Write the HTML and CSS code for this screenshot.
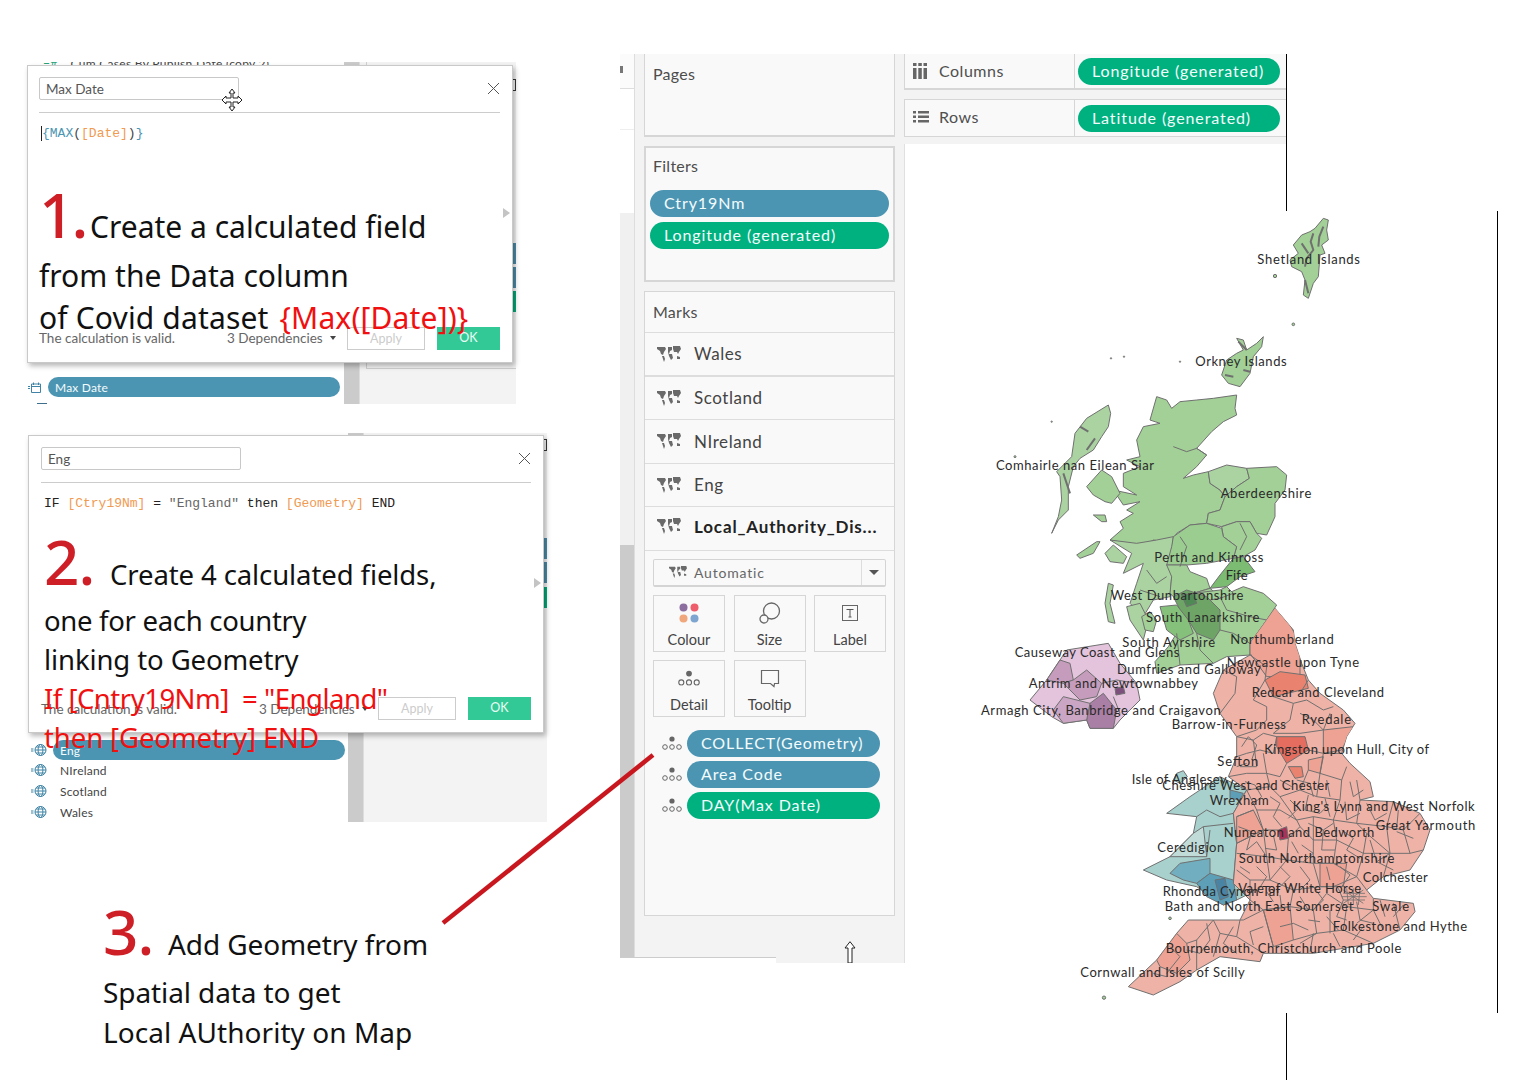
FILE: index.html
```html
<!DOCTYPE html>
<html lang="en">
<head>
<meta charset="utf-8">
<title>Tableau map walkthrough</title>
<link rel="stylesheet" href="styles.css">
</head>
<body>
<svg class="defs" width="0" height="0" aria-hidden="true">
  <defs>
    <symbol id="i-map" viewBox="0 0 24 16">
      <path fill="#6a6a6a" d="M0 1h8l1 2-2 3-1 3-2-1-1-3-3-2zM5 10h2l1 3-1 3-1-3zM11 1h4v3l-2 1-1 3 3 0 1 4-2 2-2-4-1-4zM16 0h7l1 3-2 3-1 2-1-2-3 0-1-3zM20 10l3 1 0 2-3 0z"/>
    </symbol>
    <symbol id="i-detail" viewBox="0 0 20 14">
      <circle cx="10" cy="3" r="2.6" fill="#666"/>
      <g fill="none" stroke="#666" stroke-width="1"><circle cx="3" cy="11" r="2.3"/><circle cx="10" cy="11" r="2.3"/><circle cx="17" cy="11" r="2.3"/></g>
    </symbol>
    <symbol id="i-globe" viewBox="0 0 16 14">
      <g fill="none" stroke="#3f84a6" stroke-width="1"><circle cx="9.500" cy="7" r="5.500"/><ellipse cx="9.500" cy="7" rx="2.400" ry="5.500"/><path d="M4 7h11M5 4h9M5 10h9"/></g>
      <path d="M0 6h2.500M0 8h2.500" stroke="#3f84a6"/>
    </symbol>
  </defs>
</svg>

<main class="canvas">

  <section class="backdrop backdrop-one">
    <p class="cut-row"><span class="cut-icon">=#</span>Cum Cases By Publish Date (copy 2)</p>
    <div class="backdrop-strip"></div>
    <div class="backdrop-side"><div class="side-frame"></div></div>
    <div class="field-row field-row-one">
      <svg class="cal-icon" width="13" height="11" viewBox="0 0 13 11"><path d="M0 4.500h2M0 6.500h2M3.500 2h9v8.500h-9zM3.500 4.500h9M5.500 .5v2.500M10.500 .5v2.500" fill="none" stroke="#3f84a6"/></svg>
      <span class="pill pill-blue pill-small">Max Date</span>
    </div>
    <span class="cut-dash"></span>
    <span class="edge-tab edge-a"></span><span class="edge-tab edge-b"></span><span class="edge-tab edge-c"></span>
    <span class="edge-mark edge-mark-one"></span>
  </section>

  <section class="dialog dialog-one">
    <header class="dialog-head">
      <div class="name-input">Max Date</div>
      <svg class="close" width="13" height="13" viewBox="0 0 13 13"><path d="M1 1l11 11M12 1L1 12" stroke="#555" fill="none"/></svg>
    </header>
    <div class="code"><span class="caret"></span><span class="c-blue">{MAX</span>(<span class="c-orange">[Date]</span>)<span class="c-blue">}</span></div>
    <span class="side-arrow"></span>
    <footer class="dialog-foot">
      <span class="valid">The calculation is valid.</span>
      <span class="deps">3 Dependencies <i class="caret-down"></i></span>
      <span class="btn-apply">Apply</span>
      <span class="btn-ok">OK</span>
    </footer>
  </section>

  <svg class="move-cursor" width="24" height="24" viewBox="0 0 24 24"><path d="M12 1l3 4h-2v5h5V8l4 4-4 4v-2h-5v5h2l-3 4-3-4h2v-5H6v2l-4-4 4-4v2h5V5H9z" fill="#fff" stroke="#222"/></svg>

  <section class="backdrop backdrop-two">
    <div class="backdrop-strip"></div>
    <div class="backdrop-side"></div>
    <ul class="field-list">
      <li class="field-row"><svg class="globe" width="16" height="14"><use href="#i-globe"/></svg><span class="pill pill-blue pill-small pill-eng">Eng</span></li>
      <li class="field-row"><svg class="globe" width="16" height="14"><use href="#i-globe"/></svg><span class="field-name">NIreland</span></li>
      <li class="field-row"><svg class="globe" width="16" height="14"><use href="#i-globe"/></svg><span class="field-name">Scotland</span></li>
      <li class="field-row"><svg class="globe" width="16" height="14"><use href="#i-globe"/></svg><span class="field-name">Wales</span></li>
    </ul>
    <span class="edge-tab edge-d"></span><span class="edge-tab edge-e"></span><span class="edge-tab edge-f"></span>
    <span class="edge-mark edge-mark-two"></span>
  </section>

  <section class="dialog dialog-two">
    <header class="dialog-head">
      <div class="name-input">Eng</div>
      <svg class="close" width="13" height="13" viewBox="0 0 13 13"><path d="M1 1l11 11M12 1L1 12" stroke="#555" fill="none"/></svg>
    </header>
    <div class="code code-dark">IF <span class="c-orange">[Ctry19Nm]</span> = <span class="c-gray">"England"</span> then <span class="c-orange">[Geometry]</span> END</div>
    <span class="side-arrow"></span>
    <footer class="dialog-foot">
      <span class="valid">The calculation is valid.</span>
      <span class="deps">3 Dependencies <i class="caret-down"></i></span>
      <span class="btn-apply">Apply</span>
      <span class="btn-ok">OK</span>
    </footer>
  </section>

  <div class="note note-one">
    <p class="line line-a"><span class="num">1.</span><span>Create a calculated field</span></p>
    <p class="line line-b">from the Data column</p>
    <p class="line line-c"><span>of Covid dataset</span><span class="red">{Max([Date])}</span></p>
  </div>

  <div class="note note-two">
    <p class="line line-a"><span class="num">2.</span><span>Create 4 calculated fields,</span></p>
    <p class="line line-d">one for each country</p>
    <p class="line line-e">linking to Geometry</p>
    <p class="line line-e red tight">If [Cntry19Nm]  = "England"</p>
    <p class="line line-e red">then [Geometry] END</p>
  </div>

  <div class="note note-three">
    <p class="line line-a"><span class="num">3.</span><span>Add Geometry from</span></p>
    <p class="line line-d">Spatial data to get</p>
    <p class="line line-f">Local AUthority on Map</p>
  </div>

  <aside class="sidebar">
    <div class="side-rail">
      <div class="rail-top"><i class="rail-dot"></i></div>
      <div class="rail-gap"></div>
      <div class="rail-plain"></div>
      <div class="rail-mid"></div>
      <div class="rail-scroll"></div>
    </div>
    <div class="cards">
      <section class="card card-pages"><h2 class="card-title">Pages</h2></section>
      <section class="card card-filters">
        <h2 class="card-title">Filters</h2>
        <div class="pill-stack">
          <span class="pill pill-blue">Ctry19Nm</span>
          <span class="pill pill-green">Longitude (generated)</span>
        </div>
      </section>
      <section class="card card-marks">
        <h2 class="card-title marks-title">Marks</h2>
        <div class="layer"><svg class="map-icon" width="24" height="16"><use href="#i-map"/></svg>Wales</div>
        <div class="layer"><svg class="map-icon" width="24" height="16"><use href="#i-map"/></svg>Scotland</div>
        <div class="layer"><svg class="map-icon" width="24" height="16"><use href="#i-map"/></svg>NIreland</div>
        <div class="layer"><svg class="map-icon" width="24" height="16"><use href="#i-map"/></svg>Eng</div>
        <div class="layer layer-active"><svg class="map-icon" width="24" height="16"><use href="#i-map"/></svg>Local_Authority_Dis...</div>
        <div class="marks-body">
          <div class="mark-type">
            <svg class="map-icon-small" width="18" height="12"><use href="#i-map"/></svg>
            <span class="mark-type-name">Automatic</span>
            <span class="mark-type-arrow"><i></i></span>
          </div>
          <div class="mark-grid">
            <div class="mark-btn">
              <svg width="22" height="22" viewBox="0 0 22 22"><circle cx="5.500" cy="5.500" r="4" fill="#8c6d9f"/><circle cx="16.500" cy="5.500" r="4" fill="#ee5d6c"/><circle cx="5.500" cy="16.500" r="4" fill="#f0a77c"/><circle cx="16.500" cy="16.500" r="4" fill="#7da5cf"/></svg>
              <span>Colour</span>
            </div>
            <div class="mark-btn">
              <svg width="22" height="22" viewBox="0 0 22 22"><circle cx="12.500" cy="9" r="8" fill="none" stroke="#666" stroke-width="1.300"/><circle cx="5" cy="17" r="4" fill="#f9f9f9" stroke="#666" stroke-width="1.300"/></svg>
              <span>Size</span>
            </div>
            <div class="mark-btn">
              <svg width="22" height="22" viewBox="0 0 22 22"><rect x="3.500" y="3.500" width="15" height="15" fill="none" stroke="#666"/><path d="M7.500 7.500h7M11 7.500v7.500M9.500 15h3" fill="none" stroke="#555"/></svg>
              <span>Label</span>
            </div>
            <div class="mark-btn">
              <svg width="22" height="22" viewBox="0 0 20 14"><use href="#i-detail"/></svg>
              <span>Detail</span>
            </div>
            <div class="mark-btn">
              <svg width="22" height="22" viewBox="0 0 22 22"><path d="M2.500 3.500h17v13h-4l-.5 3-3.500-3h-9z" fill="none" stroke="#666" stroke-width="1.200"/></svg>
              <span>Tooltip</span>
            </div>
          </div>
          <div class="mark-pill"><svg width="20" height="14"><use href="#i-detail"/></svg><span class="pill pill-blue">COLLECT(Geometry)</span></div>
          <div class="mark-pill"><svg width="20" height="14"><use href="#i-detail"/></svg><span class="pill pill-blue">Area Code</span></div>
          <div class="mark-pill"><svg width="20" height="14"><use href="#i-detail"/></svg><span class="pill pill-green">DAY(Max Date)</span></div>
        </div>
      </section>
      <div class="sidebar-foot">
        <svg class="up-cursor" width="12" height="22" viewBox="0 0 12 22"><path d="M6 .7l5 6.300H8v15H4V7H1z" fill="#fff" stroke="#222"/></svg>
      </div>
    </div>
    <div class="foot-tab"></div>
  </aside>

  <section class="shelves">
    <div class="shelf shelf-columns">
      <div class="shelf-label">
        <svg width="14" height="16" viewBox="0 0 14 16"><path d="M0 5h3.500v11H0zM5.300 5h3.500v11H5.300zM10.500 5H14v11h-3.500zM0 0h3.500v3H0zM5.300 0h3.500v3H5.300zM10.500 0H14v3h-3.500z" fill="#666"/></svg>
        <span>Columns</span>
      </div>
      <div class="shelf-body"><span class="pill pill-green pill-shelf">Longitude (generated)</span></div>
    </div>
    <div class="shelf shelf-rows">
      <div class="shelf-label">
        <svg width="16" height="14" viewBox="0 0 16 14"><path d="M0 1h3v2.500H0zM5 1h11v2.500H5zM0 5.500h3V8H0zM5 5.500h11V8H5zM0 10h3v2.500H0zM5 10h11v2.500H5z" fill="#666"/></svg>
        <span>Rows</span>
      </div>
      <div class="shelf-body"><span class="pill pill-green pill-shelf">Latitude (generated)</span></div>
    </div>
  </section>
  <div class="view-frame"></div>

  <span class="rule rule-top"></span>
  <span class="rule rule-right"></span>
  <span class="rule rule-bottom"></span>

  <svg class="pointer-line" width="240" height="190" viewBox="0 0 240 190"><path d="M13 178L223 10" stroke="#c8171e" stroke-width="4.500" fill="none"/></svg>

  <svg class="uk-map" width="520" height="820" viewBox="0 0 1560 2460" role="img" aria-label="Map of UK local authorities">
    <defs>
      <clipPath id="clip-england"><path d="M885 1225L915 1260 940 1290 945 1330 965 1390 985 1440 1020 1480 1090 1530 1125 1570 1100 1610 1085 1660 1110 1690 1170 1745 1180 1790 1140 1800 1240 1805 1320 1840 1350 1890 1330 1950 1290 2010 1210 2030 1160 2070 1180 2095 1300 2110 1305 2135 1260 2190 1180 2230 1000 2260 850 2260 840 2285 720 2270 650 2310 600 2345 520 2385 445 2360 530 2280 590 2200 625 2160 700 2160 780 2160 810 2100 760 2050 770 1930 760 1840 800 1770 745 1730 770 1670 770 1610 720 1540 700 1480 730 1410 810 1365 810 1330 860 1260z"/></clipPath>
    </defs>

    <g class="shape" fill="#a2d096">
      <path d="M1030 55L1045 60 1040 90 1045 120 1025 135 1035 160 1020 165 1015 230 1000 250 985 295 970 285 975 240 965 215 935 200 930 180 955 160 940 135 965 105 990 95 1005 85z"/>
      <path class="thick" d="M1000 100L992 125 1000 150 980 175 975 200M965 130L985 160M1030 80L1018 110 1015 140M975 240L985 280"/>
      <circle cx="885" cy="228" r="5"/><circle cx="940" cy="373" r="4"/>
      <circle cx="215" cy="665" r="2"/><circle cx="393" cy="475" r="2"/><circle cx="432" cy="470" r="2"/><circle cx="600" cy="485" r="2"/><circle cx="105" cy="770" r="3"/>
      <circle cx="570" cy="2155" r="4"/><circle cx="372" cy="2393" r="5"/>
      <path d="M770 415L790 420 800 450 830 430 850 410 845 440 820 470 810 520 780 560 745 550 725 525 740 480 770 460 790 450z"/>
      <path class="thick" d="M775 425L800 450M735 525L760 530M790 510L810 515"/>
      <path fill="#abd3a1" d="M385 615L392 640 385 680 365 710 340 750 300 775 280 800 265 860 265 930 235 960 215 1000 235 950 245 900 240 830 230 815 275 770 285 700 320 655z"/>
      <path class="thick" d="M300 680L325 695M345 715L320 750M250 820L270 880"/>
      <path d="M530 590L560 600 575 625 600 605 650 600 700 595 770 585 765 625 770 645 730 665 695 695 650 745 680 765 650 800 610 835 640 825 685 815 690 850 720 870 735 890 720 930 685 940 680 970 630 975 590 1000 575 1030 520 1020 470 1050 440 1030 390 1020 430 985 420 965 460 940 440 930 480 905 430 915 400 870 470 885 430 860 430 820 480 800 440 780 480 770 470 720 490 680 540 670 510 660z"/>
      <path class="line" d="M580 740L620 755 650 745 680 765"/>
      <path d="M320 860L365 810 395 830 420 880 395 910 375 905 340 885z"/>
      <path d="M290 1065L350 1025 360 1025 340 1060 300 1075z"/>
      <path fill="#abd3a1" d="M375 1060L400 1035 440 1070 430 1090 390 1085z"/>
      <path d="M340 945L375 945 380 965 365 965z"/>
      <path fill="#abd3a1" d="M390 1020L470 1030 530 1020 580 1010 570 1100 575 1130 570 1190 520 1200 490 1250 450 1210 470 1150 490 1090 430 1120 455 1060z"/>
      <path fill="#abd3a1" d="M685 815L740 795 800 805 808 835 770 860 735 890 720 870 690 850z"/>
      <path d="M800 805L890 800 920 825 915 870 885 910 885 950 860 1005 830 1000 810 965 770 965 725 980 680 970 685 940 720 930 735 890 770 860 808 835z"/>
      <path d="M725 980L770 965 810 965 830 1000 845 1015 825 1050 790 1070 760 1075 770 1040 730 1010z"/>
      <path fill="#9bcc90" d="M580 1010L630 975 680 970 725 985 730 1010 770 1040 760 1075 680 1090 620 1095 560 1095 575 1040z"/>
      <path d="M560 1095L620 1095 630 1115 680 1135 690 1165 640 1180 580 1190 570 1180 575 1130z"/>
      <path fill="#7cbb72" d="M690 1165L720 1125 760 1075 790 1070 825 1115 780 1130 740 1160z"/>
      <path d="M720 1190L790 1160 850 1180 890 1215 860 1260 810 1330 810 1365 740 1370 700 1390 600 1395 530 1420 525 1385 565 1340 590 1300 620 1240 600 1200 640 1180 690 1165z"/>
      <path d="M640 1180L720 1170 740 1160 760 1180 720 1195 690 1200z"/>
      <path fill="#abd3a1" d="M385 1150L400 1155 390 1210 405 1270 385 1265 375 1210z"/>
      <path fill="#abd3a1" d="M440 1220L480 1210 505 1260 490 1320 470 1290 450 1260z"/>
      <path d="M485 1250L510 1235 530 1260 520 1295 495 1290z"/>
      <path fill="#6ea567" d="M580 1190L620 1170 680 1190 720 1230 720 1290 700 1320 650 1300 625 1260 600 1230z"/>
      <path fill="#4f8a55" d="M605 1185L640 1180 650 1210 620 1220z"/>
      <path fill="#86c17c" d="M540 1220L590 1215 625 1260 640 1300 600 1320 560 1290z"/>
      <path class="line" d="M720 1190L740 1230 810 1250 860 1260M720 1290L760 1300 810 1330M650 1300L660 1350 700 1390M590 1300L600 1395M500 1110L530 1150 560 1130M480 1170L540 1190"/>
      <path class="line" d="M600 1100L620 1040 600 1010M780 970L800 1010 780 1050"/>
    </g>

    <g class="shape">
      <path fill="#a8d0cc" d="M720 1730L800 1770 760 1840 770 1930 760 2050 810 2080 770 2100 730 2115 650 2060 560 2040 490 2010 570 1970 640 1900 650 1850 560 1840 630 1790z"/>
      <path fill="#a8d0cc" d="M590 1720L610 1712 622 1730 600 1750 580 1740z"/>
      <path fill="#c1dcd8" d="M640 1900L670 1880 680 1970 570 1970z"/>
      <path fill="#71afc0" d="M570 2020L600 1990 690 1975 690 2020 650 2050 610 2040z"/>
      <path fill="#5e9fb8" d="M650 2050L690 2020 760 2040 770 2100 730 2115 680 2090z"/>
      <path fill="#4a84a5" d="M705 2040L735 2035 745 2090 720 2100z"/>
      <path fill="#5e9fb8" d="M750 1770L790 1780 780 1800 750 1795z"/>
      <path class="line" d="M650 1850L680 1830 720 1850 760 1840M670 1880L760 1870M680 1970L690 1890"/>
    </g>

    <g class="shape">
      <path fill="#e3c4dc" d="M260 1350L385 1330 420 1390 470 1450 480 1500 420 1560 400 1585 330 1585 320 1560 250 1570 215 1550 150 1500 200 1440 240 1380z"/>
      <path fill="#c69cbc" d="M240 1380L270 1390 280 1440 250 1450 200 1440z"/>
      <path fill="#c69cbc" d="M280 1440L320 1410 365 1450 350 1490 300 1500 250 1450z"/>
      <path fill="#aa7fa5" d="M330 1510L370 1480 410 1530 400 1585 330 1585 320 1560z"/>
      <path fill="#cba6c4" d="M250 1490L330 1510 320 1560 250 1570 220 1530z"/>
      <path fill="#7c4f7d" d="M405 1465L430 1460 435 1480 408 1485z"/>
      <path class="line" d="M365 1450L410 1440 470 1450M400 1490L420 1540"/>
    </g>

    <g class="shape">
      <path fill="#efb2a6" d="M885 1225L915 1260 940 1290 945 1330 965 1390 985 1440 1020 1480 1090 1530 1125 1570 1100 1610 1085 1660 1110 1690 1170 1745 1180 1790 1140 1800 1240 1805 1320 1840 1350 1890 1330 1950 1290 2010 1210 2030 1160 2070 1180 2095 1300 2110 1305 2135 1260 2190 1180 2230 1000 2260 850 2260 840 2285 720 2270 650 2310 600 2345 520 2385 445 2360 530 2280 590 2200 625 2160 700 2160 780 2160 810 2100 760 2050 770 1930 760 1840 800 1770 745 1730 770 1670 770 1610 720 1540 700 1480 730 1410 810 1365 810 1330 860 1260z"/>
      <g clip-path="url(#clip-england)">
        <path fill="#eda293" stroke="none" d="M810 1250L900 1220 960 1330 960 1430 860 1430 810 1360z"/>
        <path fill="#e9836f" d="M855 1440L900 1415 975 1425 985 1465 880 1490z"/>
        <path fill="#eda293" d="M1030 1590L1120 1580 1085 1650 1030 1660z"/>
        <path fill="#e46d60" d="M890 1610L975 1610 985 1650 920 1690 890 1640z"/>
        <path fill="#e9836f" d="M925 1700L965 1700 970 1730 945 1735z"/>
        <path fill="#eda293" d="M985 1680L1030 1670 1020 1720 985 1710z"/>
        <path fill="#a83258" d="M895 1890L920 1880 925 1915 900 1920z"/>
        <path fill="#eda293" d="M770 1850L820 1830 850 1890 770 1930z"/>
        <path fill="#eda293" d="M850 2130L930 2120 940 2220 880 2240z"/>
        <path fill="#eda293" d="M530 2280L590 2200 620 2230 630 2280 590 2320 540 2300z"/>
        <path fill="#eda293" d="M1020 1990L1100 1990 1090 2060 1020 2060z"/>
        <path class="line" d="M810 1365L860 1400 855 1440 820 1500 860 1520 860 1560 830 1590 770 1610M730 1410L770 1430 765 1480 720 1540"/>
        <path class="line" d="M880 1490L940 1510 980 1500 1030 1530 1060 1520M940 1510L930 1560 880 1600 960 1600 1030 1590M960 1540L1000 1560 1030 1590 1050 1540M985 1440L960 1480"/>
        <path class="line" d="M770 1610L820 1620 850 1600 890 1610 880 1660 840 1650 800 1660 770 1670M820 1620L830 1700 780 1700M850 1660L860 1720 800 1720 745 1730"/>
        <path class="line" d="M920 1690L900 1730 860 1720 870 1760 800 1770M985 1650L1030 1660 1085 1660M1030 1660L1020 1720 1085 1740 1100 1700M985 1710L960 1770 900 1790 870 1760M1020 1720L1010 1790 960 1770"/>
        <path class="line" d="M1085 1740L1080 1800 1010 1790M1140 1800L1130 1740M1080 1800L1060 1860 1000 1850 950 1860 900 1790M1140 1800L1130 1870 1060 1860M1240 1805L1220 1880 1130 1870"/>
        <path class="line" d="M800 1770L830 1830 900 1830 950 1860M820 1830L770 1850M830 1830L850 1890 770 1930M850 1890L895 1890M925 1915L960 1880 950 1860M1000 1850L1000 1920 960 1880"/>
        <path class="line" d="M1320 1840L1270 1890 1220 1880M1270 1890L1290 1960 1330 1950M1290 1960L1230 1960 1220 1880M1230 1960L1210 2030M1160 1900L1230 1960M1160 1900L1130 1870M1160 1900L1150 1960 1230 1960"/>
        <path class="line" d="M1000 1920L1070 1920 1060 1860M1070 1920L1150 1960M1070 1920L1060 1990 1000 1990 1000 1920M925 1915L920 1980 1000 1990M920 1980L860 1970 850 1890M860 1970L770 1960"/>
        <path class="line" d="M1150 1960L1130 2030 1060 1990M1130 2030L1160 2070M1130 2030L1060 2060 1020 2060 1000 1990M860 1970L870 2040 920 1980M870 2040L940 2070 1020 2060M870 2040L810 2040 770 2010"/>
        <path class="line" d="M810 2040L810 2100 850 2130 930 2120 940 2070M930 2120L1000 2130 1040 2080M1000 2130L1010 2200 940 2220M1010 2200L1090 2190 1100 2120 1040 2080M1090 2190L1180 2230M1100 2120L1180 2130 1210 2190M1180 2130L1180 2095"/>
        <path class="line" d="M850 2130L790 2160 780 2160 770 2210 720 2200 700 2160M770 2210L850 2260M880 2240L850 2130M720 2200L700 2270M700 2160L650 2220 620 2230M650 2220L650 2310M1240 2110L1260 2190M1130 2170L1180 2130M960 2230L1010 2200M1050 2130L1050 2200"/>
        <path class="line" d="M785 1640L805 1610 830 1635 815 1680M770 1700L800 1690M795 1745L825 1755 845 1790 815 1815M870 1790L900 1810 880 1850 905 1880M930 1800L955 1825 925 1855M985 1785L975 1830 1020 1840 1045 1815M1035 1795L1050 1850M1095 1805L1100 1860 1140 1840M1160 1810L1185 1860 1220 1840M1255 1830L1250 1885"/>
        <path class="line" d="M900 1740L935 1760M950 1740L990 1750 1000 1790M1040 1740L1050 1790M1110 1745L1120 1790 1150 1770M985 1870L1030 1890 1060 1870M1030 1890L1025 1950 1065 1950M965 1935L1000 1960 970 1985M935 1925L955 1960M880 1905L890 1950 855 1945M800 1950L830 1925 860 1970M775 1880L815 1895 800 1950"/>
        <path class="line" d="M1085 1890L1120 1915 1100 1950 1140 1975M1170 1920L1190 1985 1230 1960M1250 1895L1300 1915M1190 1985L1240 2010M1080 2000L1110 2025 1085 2060M1040 2000L1050 2040M960 2000L990 2040 960 2070M900 2000L930 2030 900 2060M830 2000L860 2030 835 2070M780 2000L810 2020"/>
        <path class="line" d="M1000 2060L1030 2100 1000 2130M960 2090L985 2130M900 2085L905 2125M860 2075L880 2105M1075 2065L1090 2100 1070 2150 1100 2160M1040 2150L1075 2190M985 2160L1020 2165M940 2170L985 2190M1130 2105L1140 2160 1180 2170M1200 2100L1215 2150M1270 2115L1240 2150"/>
        <path class="line" d="M850 2180L810 2195 820 2235M900 2180L940 2170M760 2180L730 2230 770 2260M680 2170L690 2220 660 2260M620 2250L660 2260M570 2240L600 2270 560 2320M520 2320L560 2330M1150 2180L1120 2220M1060 2200L1080 2240M1000 2200L990 2255"/>
      </g>
      <path class="dense" d="M1090 2070L1150 2110M1150 2070L1090 2110M1085 2090H1160M1120 2065V2115M1100 2065L1105 2115M1140 2065L1135 2115M1090 2080H1155M1090 2100H1155"/>
    </g>

    <g class="labels">
      <text x="832" y="192" textLength="308">Shetland Islands</text>
      <text x="646" y="497" textLength="274">Orkney Islands</text>
      <text x="48" y="810" textLength="474">Comhairle nan Eilean Siar</text>
      <text x="722" y="893" textLength="272">Aberdeenshire</text>
      <text x="523" y="1086" textLength="327">Perth and Kinross</text>
      <text x="737" y="1141" textLength="66">Fife</text>
      <text x="392" y="1200" textLength="398">West Dunbartonshire</text>
      <text x="498" y="1265" textLength="340">South Lanarkshire</text>
      <text x="427" y="1340" textLength="278">South Ayrshire</text>
      <text x="104" y="1370" textLength="494">Causeway Coast and Glens</text>
      <text x="751" y="1331" textLength="310">Northumberland</text>
      <text x="740" y="1401" textLength="397">Newcastle upon Tyne</text>
      <text x="411" y="1421" textLength="431">Dumfries and Galloway</text>
      <text x="146" y="1463" textLength="508">Antrim and Newtownabbey</text>
      <text x="815" y="1490" textLength="397">Redcar and Cleveland</text>
      <text x="3" y="1544" textLength="719">Armagh City, Banbridge and Craigavon</text>
      <text x="575" y="1587" textLength="343">Barrow-in-Furness</text>
      <text x="965" y="1571" textLength="148">Ryedale</text>
      <text x="853" y="1661" textLength="494">Kingston upon Hull, City of</text>
      <text x="712" y="1697" textLength="123">Sefton</text>
      <text x="455" y="1753" textLength="285">Isle of Anglesey</text>
      <text x="547" y="1769" textLength="501">Cheshire West and Chester</text>
      <text x="689" y="1816" textLength="177">Wrexham</text>
      <text x="938" y="1832" textLength="546">King's Lynn and West Norfolk</text>
      <text x="1187" y="1889" textLength="299">Great Yarmouth</text>
      <text x="731" y="1912" textLength="452">Nuneaton and Bedworth</text>
      <text x="532" y="1955" textLength="201">Ceredigion</text>
      <text x="776" y="1989" textLength="467">South Northamptonshire</text>
      <text x="1148" y="2045" textLength="195">Colchester</text>
      <text x="548" y="2088" textLength="352">Rhondda Cynon Taf</text>
      <text x="775" y="2078" textLength="368">Vale of White Horse</text>
      <text x="554" y="2134" textLength="566">Bath and North East Somerset</text>
      <text x="1177" y="2132" textLength="110">Swale</text>
      <text x="1058" y="2192" textLength="403">Folkestone and Hythe</text>
      <text x="557" y="2258" textLength="707">Bournemouth, Christchurch and Poole</text>
      <text x="301" y="2331" textLength="493">Cornwall and Isles of Scilly</text>
    </g>
  </svg>

</main>
</body>
</html>
```

FILE: styles.css
```css
* { box-sizing: border-box; }
html, body { margin: 0; padding: 0; background: #fff; }
body { font-family: "Lato", "Liberation Sans", sans-serif; color: #333; }
.defs { position: absolute; }
.canvas { position: relative; width: 1526px; height: 1080px; overflow: hidden; background: #fff; }
p, h2, ul { margin: 0; padding: 0; }
ul { list-style: none; }

/* pills */
.pill { display: flex; align-items: center; border-radius: 14px; color: #f4fbfc; font-size: 16px; letter-spacing: .9px; padding: 0 0 2px 14px; height: 27px; }
.pill-blue { background: #4b95b3; }
.pill-green { background: #00b180; }
.pill-small { height: 20px; font-size: 12px; letter-spacing: .2px; padding: 0 0 0 7px; flex: 1; }

/* backdrops behind the dialogs */
.backdrop { position: absolute; background: #fff; overflow: hidden; }
.backdrop-one { left: 27px; top: 62px; width: 489px; height: 342px; }
.backdrop-two { left: 28px; top: 433px; width: 519px; height: 389px; }
.backdrop-strip { position: absolute; top: 0; bottom: 0; background: #cbcbcb; }
.backdrop-one .backdrop-strip { left: 317px; width: 15px; }
.backdrop-two .backdrop-strip { left: 320px; width: 15px; }
.backdrop-side { position: absolute; top: 0; bottom: 0; right: 0; background: #f3f3f3; border-left: 1px solid #ddd; }
.backdrop-one .backdrop-side { left: 332px; }
.backdrop-two .backdrop-side { left: 335px; }
.side-frame { position: absolute; left: 6px; top: 0; right: 0; height: 307px; border-left: 1px solid #d0d0d0; border-bottom: 1px solid #d0d0d0; }
.cut-row { position: absolute; left: 16px; top: -6px; font-size: 12px; letter-spacing: .3px; color: #444; white-space: pre; display: flex; gap: 13px; }
.cut-icon { color: #2aa37a; }
.cut-dash { position: absolute; left: 10px; bottom: 0; width: 10px; height: 1px; background: #3f6f8f; }
.field-row { display: flex; align-items: center; gap: 6px; }
.field-row-one { position: absolute; left: 1px; top: 315px; width: 312px; }
.cal-icon { flex: none; margin-right: 1px; }
.field-list { position: absolute; left: 3px; top: 307px; width: 314px; display: flex; flex-direction: column; gap: 1px; }
.field-list .field-row { height: 20px; gap: 6px; }
.field-list .field-row:first-child { margin-bottom: -1px; }
.globe { flex: none; }
.field-name { font-size: 12px; padding-left: 7px; color: #444; letter-spacing: .2px; }
.edge-tab { position: absolute; right: 0; width: 3px; height: 21px; background: #4b8aa6; }
.edge-a { top: 181px; } .edge-b { top: 205px; } .edge-c { top: 229px; background: #00a877; }
.edge-d { top: 105px; } .edge-e { top: 129px; } .edge-f { top: 154px; background: #00a877; }
.edge-mark { position: absolute; right: 0; width: 3px; height: 12px; border: 1px solid #333; border-left: 0; }
.edge-mark-one { top: 17px; }
.edge-mark-two { top: 6px; }

/* dialogs */
.dialog { position: absolute; background: #fff; border: 1px solid #c9c9c9; box-shadow: 2px 3px 5px rgba(0,0,0,.28); display: flex; flex-direction: column; padding: 11px 12px 12px; }
.dialog-one { left: 27px; top: 65px; width: 486px; height: 298px; padding-left: 11px; }
.dialog-two { left: 28px; top: 435px; width: 516px; height: 298px; }
.dialog-head { display: flex; justify-content: space-between; align-items: center; padding-bottom: 12px; border-bottom: 1px solid #ccc; height: 36px; flex: none; }
.name-input { width: 200px; height: 23px; border: 1px solid #c8c8c8; border-radius: 2px; font-size: 13.500px; padding: 3px 6px; color: #555; }
.close { margin-top: -1px; }
.code { font-family: "Liberation Mono", monospace; font-size: 13px; margin-top: 13px; padding-left: 3px; position: relative; color: #444; white-space: pre; }
.code-dark { color: #222; }
.caret { position: absolute; left: 2px; top: 0; width: 1px; height: 15px; background: #222; }
.c-blue { color: #4b95b3; } .c-orange { color: #f09a52; } .c-gray { color: #666; }
.side-arrow { position: absolute; right: 2px; top: 142px; width: 0; height: 0; border-left: 7px solid #c4c4c4; border-top: 5px solid transparent; border-bottom: 5px solid transparent; }
.dialog-foot { margin-top: auto; display: flex; align-items: center; height: 23px; font-size: 13.500px; color: #666; }
.valid { width: 188px; }
.deps { flex: 1; display: flex; align-items: center; gap: 4px; white-space: pre; }
.dialog-one .valid, .dialog-one .deps { margin-top: -2px; }
.dialog-two .valid { width: 218px; }
.caret-down { width: 0; height: 0; border-top: 4px solid #444; border-left: 3.500px solid transparent; border-right: 3.500px solid transparent; }
.btn-apply { width: 78px; height: 23px; border: 1px solid #ccc; text-align: center; color: #ccc; font-size: 12.500px; line-height: 21px; margin-right: 12px; }
.btn-ok { width: 63px; height: 23px; background: #33c997; color: #e9fbf5; text-align: center; font-size: 12.500px; line-height: 22px; }
.move-cursor { position: absolute; left: 220px; top: 88px; }

/* annotations */
.note { position: absolute; font-family: "Noto Sans", "Open Sans", sans-serif; color: #111; }
.line { display: flex; align-items: baseline; white-space: pre; }
.num { color: #cf1f26; font-size: 62px; line-height: 60px; flex: none; letter-spacing: -1px; font-weight: 500; }
.red { color: #f01010; }
.tight { letter-spacing: -.5px; }
.note-one { left: 39px; top: 184px; font-size: 30px; }
.note-one .num { width: 51px; letter-spacing: -3px; margin-left: 0; }
.note-one .line-a { height: 60px; }
.note-one .line-b { height: 41px; margin-top: 11px; line-height: 41px; }
.note-one .line-c { height: 41px; margin-top: 1px; line-height: 41px; gap: 11px; letter-spacing: .15px; }
.note-two { left: 44px; top: 531px; font-size: 27.500px; letter-spacing: -.1px; }
.note-two .num { width: 66px; }
.note-two .line-a { height: 60px; }
.note-two .line-d { margin-top: 10px; height: 39px; line-height: 39px; letter-spacing: -.3px; }
.line-d { height: 40px; line-height: 40px; }
.line-e { height: 39px; line-height: 39px; }
.note-three { left: 103px; top: 901px; font-size: 28px; letter-spacing: -.1px; }
.note-three .num { width: 65px; }
.note-three .line-a { height: 60px; }
.note-three .line-d { margin-top: 11px; }
.line-f { height: 40px; line-height: 40px; letter-spacing: .05px; }

/* sidebar */
.sidebar { position: absolute; left: 620px; top: 54px; width: 285px; height: 909px; display: flex; background: #f3f3f3; border-right: 1px solid #e0e0e0; }
.side-rail { width: 15px; flex: none; display: flex; flex-direction: column; border-right: 1px solid #ddd; background: #fff; }
.rail-top { height: 35px; background: #fbfbfb; border-bottom: 1px solid #ddd; position: relative; }
.rail-dot { position: absolute; left: 0; top: 12px; width: 3px; height: 7px; background: #777; }
.rail-gap { height: 41px; border-bottom: 1px solid #eee; }
.rail-plain { height: 83px; }
.rail-mid { height: 332px; background: #f0f0f0; }
.rail-scroll { flex: 1; background: #cbcbcb; }
.cards { flex: 1; display: flex; flex-direction: column; gap: 9px; padding-left: 9px; padding-right: 9px; }
.card { background: #f9f9f9; border: 1px solid #d6d6d6; flex: none; }
.card-pages { height: 83px; border-width: 0 1px 2px 1px; }
.card-filters { height: 136px; border-width: 2px; }
.card-filters .card-title { padding-left: 7px; padding-top: 8px; }
.card-marks { height: 625px; }
.card-title { font-size: 16px; font-weight: 400; letter-spacing: .25px; color: #4d4d4d; padding: 10px 8px 0; }
.pill-stack { display: flex; flex-direction: column; gap: 5px; padding: 15px 4px 0; }
.marks-title { height: 41px; padding-top: 10px; border-bottom: 1px solid #ddd; }
.layer { height: 43.500px; display: flex; align-items: center; gap: 13px; padding-left: 12px; font-size: 17px; letter-spacing: .55px; color: #444; border-bottom: 1px solid #ddd; }
.layer:nth-of-type(1) { border-bottom-width: 2px; }
.layer-active { font-weight: 700; color: #222; letter-spacing: .85px; padding-bottom: 4px; }
.map-icon { flex: none; }
.marks-body { padding: 8px 8px 0; display: flex; flex-direction: column; }
.mark-type { height: 28px; width: 233px; display: flex; align-items: center; border: 1px solid #d4d4d4; border-bottom-width: 2px; border-radius: 2px; padding-left: 15px; font-size: 14px; letter-spacing: .8px; color: #666; }
.map-icon-small { flex: none; }
.mark-type-name { flex: 1; padding-left: 7px; }
.mark-type-arrow { width: 24px; height: 100%; border-left: 1px solid #ddd; display: flex; align-items: center; justify-content: center; }
.mark-type-arrow i { width: 0; height: 0; border-top: 5px solid #555; border-left: 5px solid transparent; border-right: 5px solid transparent; }
.mark-grid { display: grid; grid-template-columns: repeat(3, 72px); column-gap: 8.500px; row-gap: 8px; margin-top: 8px; }
.mark-btn { height: 57px; border: 1px solid #d6d6d6; display: flex; flex-direction: column; align-items: center; justify-content: flex-start; padding-top: 6px; gap: 7px; font-size: 14.500px; color: #444; }
.mark-pill { display: flex; align-items: center; gap: 5px; margin-top: 4px; padding-left: 9px; }
.mark-grid + .mark-pill { margin-top: 13px; }
.mark-pill .pill { width: 193px; }
.mark-pill svg { flex: none; }
.sidebar-foot { flex: 1; position: relative; }
.up-cursor { position: absolute; left: 200px; bottom: 0; }
.foot-tab { position: absolute; left: 0; bottom: 0; width: 156px; height: 6px; background: #fff; border-top: 1px solid #ccc; }

/* shelves */
.shelves { position: absolute; left: 904px; top: 54px; width: 382px; height: 90px; background: #f3f3f3; display: flex; flex-direction: column; gap: 9px; }
.shelf { display: flex; background: #f9f9f9; border: 1px solid #d6d6d6; border-right: 0; flex: none; }
.shelf-columns { height: 36px; border-top: 0; border-bottom-width: 2px; }
.shelf-rows { height: 38px; }
.shelf-label { width: 170px; border-right: 1px solid #d6d6d6; display: flex; align-items: center; gap: 12px; padding: 0 0 2px 8px; font-size: 16px; letter-spacing: .5px; color: #4f4f4f; }
.shelf-label svg { flex: none; margin-top: 2px; }
.shelf-rows .shelf-label { gap: 10px; padding-bottom: 4px; }
.shelf-body { flex: 1; display: flex; align-items: center; padding-left: 3px; }
.pill-shelf { width: 202px; }
.view-frame { position: absolute; left: 904px; top: 144px; width: 1px; height: 819px; background: #e0e0e0; }

/* rules and pointer */
.rule { position: absolute; width: 1px; background: #000; }
.rule-top { left: 1286px; top: 54px; height: 157px; }
.rule-right { left: 1497px; top: 211px; height: 802px; }
.rule-bottom { left: 1286px; top: 1013px; height: 67px; }
.pointer-line { position: absolute; left: 430px; top: 745px; }

/* map */
.uk-map { position: absolute; left: 980px; top: 200px; }
.shape path, .shape circle { stroke: #707070; stroke-width: 3; stroke-linejoin: round; }
.shape .line { fill: none; }
.shape .thick { fill: none; stroke-width: 6; }
.shape .dense { fill: none; stroke-width: 2.500; }
.labels text { font-family: "Lato", "Liberation Sans", sans-serif; font-size: 39px; fill: #2a2a2a; }
```
